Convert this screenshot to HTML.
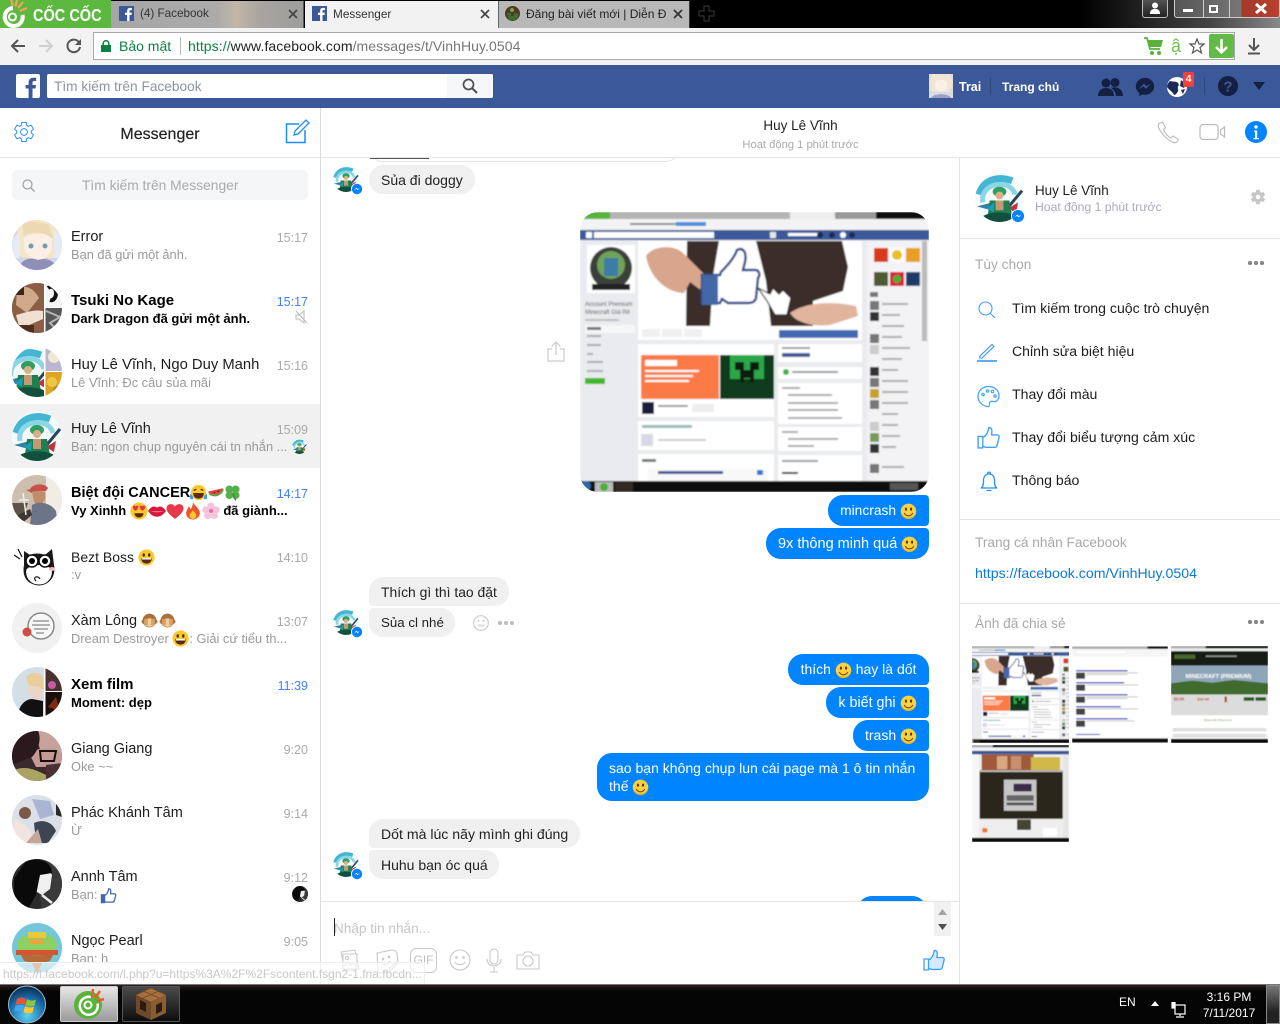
<!DOCTYPE html>
<html lang="vi"><head><meta charset="utf-8"><title>Messenger</title>
<style>
*{box-sizing:border-box}
html,body{margin:0;padding:0;width:1280px;height:1024px;overflow:hidden;background:#fff;font-family:"Liberation Sans","Noto Sans CJK SC",sans-serif;color:#111}
.b{position:absolute}
.t{position:absolute;white-space:nowrap;line-height:18px;height:18px}
svg{position:absolute;overflow:hidden}
svg.e{position:static;display:inline-block;width:16px;height:16px;vertical-align:-4px}
.bub svg.e{width:17px;height:18px;vertical-align:-5px}
.n svg.e{width:17px;height:17px}
.s svg.e{width:17px;height:17px}
.s.u svg.e{width:18px;height:18px;vertical-align:-5px}
.av{left:12px;width:50px;height:50px;border-radius:50%}
.n{left:71px;font-size:14.5px;color:#1d1d1d;margin-top:1px}
.s{left:71px;font-size:12.85px;color:#9a9a9a;margin-top:1px}
.u{font-weight:bold;color:#000}
.n.u{font-size:15px}.s.u{font-size:13px}
.tm{right:972px;font-size:12.5px;color:#aaa;margin-top:1px}
.tm.u{font-weight:normal;color:#4080ff}
.bub{position:absolute;font-size:14px;line-height:18px;white-space:nowrap;padding:6px 12px}
.in{background:#f1f0f0;color:#222;left:369px;height:29px;border-radius:14px}
.out{background:#0084ff;color:#fff;border-radius:15px 4px 4px 15px;height:31px;padding-top:6px;text-align:center}
.it{left:1012px;font-size:14.1px;color:#1d1d1d}
.hd{font-size:13.7px;color:#a9a9a9;left:975px;margin-top:1px}
.dots{position:absolute;width:16px;height:4px;background:radial-gradient(circle at 2px 2px,#888 2px,transparent 2.3px) 0 0/6px 4px repeat-x}
.ln{position:absolute;background:#e5e5e5}
</style></head><body>
<svg width="0" height="0" style="position:absolute"><defs>
<filter id="bl"><feGaussianBlur stdDeviation=".7"/></filter>
<filter id="bl2"><feGaussianBlur stdDeviation="1.4"/></filter>

<g id="sm"><circle cx="8" cy="8.3" r="7.3" fill="#fcd13e"/><path d="M1 8.3a7 7 0 0 0 14 0c-1 4-3 6-7 6s-6-2-7-6z" fill="#e9a922"/><ellipse cx="5.6" cy="6.2" rx="1" ry="1.5" fill="#5a3b0a"/><ellipse cx="10.4" cy="6.2" rx="1" ry="1.5" fill="#5a3b0a"/><path d="M4 9.8c1 2.2 2.5 2.7 4 2.7s3-.5 4-2.7" fill="none" stroke="#6b4a10" stroke-width="1"/></g>
<g id="gr"><circle cx="8" cy="8" r="7.6" fill="#fcc928"/><ellipse cx="5.4" cy="5.6" rx="1.1" ry="1.6" fill="#40290a"/><ellipse cx="10.6" cy="5.6" rx="1.1" ry="1.6" fill="#40290a"/><path d="M3 8.5h10c0 3.5-2.2 5.3-5 5.3S3 12 3 8.5z" fill="#5a2a12"/><path d="M3.6 8.5h8.8v1.4H3.6z" fill="#fff"/></g>
<g id="lau"><circle cx="8" cy="8" r="7.2" fill="#fcc928"/><path d="M3.5 6l2.5-1M12.5 6L10 5" stroke="#40290a" stroke-width="1.2"/><path d="M3 8.5h10c0 3.5-2.2 5.3-5 5.3S3 12 3 8.5z" fill="#5a2a12"/><path d="M0 9c1 1 3 2 3 4s-3 2-3 0zM16 9c-1 1-3 2-3 4s3 2 3 0z" fill="#3d9df0"/></g>
<g id="mel"><path d="M1 7a8 8 0 0 0 14-3z" fill="#e8403f"/><path d="M1 7a8 8 0 0 0 14-3l.8 1.5A9 9 0 0 1 2 10z" fill="#58a83a"/><circle cx="7" cy="8" r=".8" fill="#333"/><circle cx="10.5" cy="7" r=".8" fill="#333"/></g>
<g id="clo" fill="#54b04a"><circle cx="5" cy="5" r="3.6"/><circle cx="11" cy="5" r="3.6"/><circle cx="5" cy="10.5" r="3.6"/><circle cx="11" cy="10.5" r="3.6"/><path d="M8 8l3 7.5" stroke="#3e8a36" stroke-width="1.3"/></g>
<g id="hey"><circle cx="8" cy="8" r="7.6" fill="#fcc928"/><path d="M5 8C2 6 2 3.5 3.5 3.2 4.5 3 5 4 5 4s.5-1 1.6-.8C8 3.5 7.500 6 5 8zM11 8C8.500 6 8 3.500 9.400 3.200 10.500 3 11 4 11 4s.5-1 1.500-.8C14 3.500 14 6 11 8z" fill="#e8304a"/><path d="M4 10h8c0 2.200-2 3.800-4 3.800S4 12.200 4 10z" fill="#5a2a12"/></g>
<g id="lip"><path d="M0 8c3-4 5-5 8-3 3-2 5-1 8 3-3 4-5 5-8 5s-5-1-8-5z" fill="#d8173a"/><path d="M2 8c3 .8 8 .8 12 0-4 1.400-8 1.400-12 0z" fill="#fff"/></g>
<g id="hrt"><path d="M8 15C1 10 0 7 .6 4.500 1.500 1.500 6 .8 8 4c2-3.200 6.500-2.500 7.400.5C16 7 15 10 8 15z" fill="#e8394a"/></g>
<g id="fir"><path d="M8 0c1 3 5 5 6 9 .6 3.500-2.500 6.500-6 6.500S1.400 13 2 9c.3-2 1.500-3 2-5 1 .6 1.500 1.500 1.800 2.500C7 5 8 3 8 0z" fill="#f0532a"/><path d="M8 7c.6 2 3 3 3 5 0 2-1.500 3-3 3s-3-1-3-3c0-2 2.500-3 3-5z" fill="#fcc928"/></g>
<g id="flo"><g fill="#f6c4da"><circle cx="8" cy="3.500" r="3.200"/><circle cx="3.500" cy="7" r="3.200"/><circle cx="12.500" cy="7" r="3.200"/><circle cx="5" cy="12" r="3.200"/><circle cx="11" cy="12" r="3.200"/></g><circle cx="8" cy="8" r="1.800" fill="#e86aa0"/></g>
<g id="mon"><circle cx="2.500" cy="9" r="2" fill="#b57a4c"/><circle cx="13.500" cy="9" r="2" fill="#b57a4c"/><circle cx="8" cy="8" r="6.500" fill="#a8703f"/><ellipse cx="8" cy="10" rx="5" ry="4" fill="#f1cf9d"/><path d="M3 6.500h3.500v6H3zM9.500 6.500H13v6H9.500z" fill="#d99f63"/></g>

<g id="thumb"><path d="M2 11h4.500v11H2z M6.500 12c3-1.200 5-5 5.800-9.500 2.400-.4 3.700 2.200 2.500 7h5.400c1.700 0 2.300 1.200 1.900 2.700l-1.900 7.300c-.3 1.300-1.200 1.900-2.400 1.900H9.300l-2.800-1" fill="none" stroke-linejoin="round"/></g>
<path id="gearp" d="M19.140 12.940c.04-.3.060-.61.060-.94 0-.32-.02-.64-.07-.94l2.030-1.580c.18-.14.23-.41.120-.61l-1.920-3.320c-.12-.22-.37-.29-.59-.22l-2.390.96c-.5-.38-1.030-.7-1.620-.94l-.36-2.540c-.04-.24-.24-.41-.48-.41h-3.840c-.24 0-.43.17-.47.41l-.36 2.540c-.59.24-1.130.57-1.620.94l-2.390-.96c-.22-.08-.47 0-.59.22L2.740 8.870c-.12.21-.08.47.12.61l2.030 1.580c-.05.3-.09.63-.09.94s.02.64.07.94l-2.030 1.580c-.18.14-.23.41-.12.61l1.920 3.320c.12.22.37.29.59.22l2.390-.96c.5.38 1.030.7 1.620.94l.36 2.540c.05.24.24.41.48.41h3.840c.24 0 .44-.17.47-.41l.36-2.540c.59-.24 1.130-.56 1.620-.94l2.390.96c.22.08.47 0 .59-.22l1.920-3.320c.12-.22.07-.47-.12-.61l-2.010-1.580z"/>

<g id="zoro"><rect width="50" height="50" fill="#f4f9fa"/><path d="M4 22C8 8 22 2 38 8" fill="none" stroke="#43b6d4" stroke-width="7"/><path d="M8 30C6 18 16 10 30 12c6 1 10 6 11 10" fill="none" stroke="#8ad5e6" stroke-width="5"/><path d="M2 34l20-5-2 10z" fill="#2f7fa8"/><path d="M48 18L33 36" stroke="#28465e" stroke-width="3"/><path d="M44 30l-10 6 8 5z" fill="#c2343c"/><ellipse cx="25" cy="19" rx="7" ry="5" fill="#2f9e5f"/><circle cx="25" cy="23" r="4" fill="#d9b188"/><path d="M15 28h20l3 16H13z" fill="#1f7f50"/><path d="M21 28h8v10h-8z" fill="#c39a74"/><path d="M8 44c8-5 26-5 34 0v6H8z" fill="#124f3d"/><path d="M12 36l8-6-1 10z" fill="#17a0b8"/></g>
<g id="aerr"><rect width="50" height="50" fill="#cfd7ec"/><path d="M8 0h36l6 20-8 18H10L2 24z" fill="#f3e5c6"/><path d="M12 18c4-5 24-6 28 0v10c-3 8-8 12-14 12S15 36 12 28z" fill="#fbefe4"/><path d="M10 0l26 4 6 16c-8-8-20-10-30-4z" fill="#ecd9b1"/><circle cx="19" cy="26" r="2.500" fill="#6c9fb0"/><circle cx="33" cy="26" r="2.500" fill="#6c9fb0"/><path d="M6 50c2-10 12-14 20-10 8-3 18 1 20 10z" fill="#8f90b8"/><path d="M0 20l8-8v26H0zM42 10l8 8v20h-8z" fill="#e6eaf4"/></g>
<g id="atsu"><rect width="50" height="50" fill="#7c5540"/><path d="M0 0h32v50H0z" fill="#8a5f45"/><path d="M5 5c10-4 18 2 22 10L15 30 4 22z" fill="#cfa98a"/><path d="M4 32c8-2 18-6 27-4v8L8 46z" fill="#efe0cf"/><path d="M0 0h12v12H0z" fill="#3a2618"/><path d="M0 42h22v8H0z" fill="#4e2f1f"/><rect x="32" width="18" height="50" fill="#fff"/><rect x="33.500" width="17" height="24" fill="#f4f4f4"/><path d="M36 5c4-3 8 0 8 5s-3 8-6 7" fill="none" stroke="#111" stroke-width="4"/><rect x="33.500" y="25" width="17" height="25" fill="#575757"/><path d="M34 28l14 6-10 6 8 8" stroke="#b5b5b5" stroke-width="2" fill="none"/></g>
<g id="agrp"><rect width="50" height="50" fill="#fff"/><svg width="32" height="50" viewBox="9 0 32 50"><use href="#zoro"/></svg><rect x="33.500" width="17" height="24" fill="#b8b7cf"/><circle cx="42" cy="10" r="6" fill="#f2e7d3"/><rect x="33.500" y="25" width="17" height="25" fill="#dba626"/><circle cx="40" cy="35" r="5" fill="#f0c743"/><circle cx="46" cy="44" r="5" fill="#a87a16"/></g>
<g id="acan"><rect width="50" height="50" fill="#cdbfad"/><rect x="34" width="16" height="50" fill="#f1ece6"/><path d="M0 28h16l-8 22H0z" fill="#5d5349"/><path d="M18 14c4-6 14-6 18-1l-2 3-16 1z" fill="#c8524a"/><path d="M14 15l6-1v4z" fill="#c8524a"/><path d="M20 17h13v7c-2 6-8 7-11 3z" fill="#bf8d6a"/><path d="M20 30c6-4 18-3 24 6l2 14H18z" fill="#6a7688"/><path d="M6 40l12-6 2 6-12 10z" fill="#3e3732"/><path d="M11 18l3 22M7 25h10" stroke="#eee" stroke-width="1.500"/></g>
<g id="acat"><rect width="50" height="50" fill="#fff"/><path d="M12 12l6 4c4-2 10-2 15 0l7-6 2 16c2 8-2 20-15 20S10 36 12 26z" fill="#1a1a1a"/><path d="M14 30c6-6 20-6 26 0 2 8-4 16-13 16S12 38 14 30z" fill="#fff" stroke="#111"/><circle cx="20" cy="22" r="6" fill="#fff" stroke="#111" stroke-width="1.500"/><circle cx="33" cy="22" r="6" fill="#fff" stroke="#111" stroke-width="1.500"/><circle cx="20" cy="22" r="3" fill="#000"/><circle cx="33" cy="22" r="3" fill="#000"/><ellipse cx="40" cy="30" rx="3" ry="2" fill="#f3b6b6"/><path d="M2 16l6 4M6 10l4 8M24 42c-4-4 2-6 4-2" stroke="#111" fill="none" stroke-width="1.200"/></g>
<g id="axam"><rect width="50" height="50" fill="#f1f1f1"/><circle cx="29" cy="23" r="13" fill="#f7f7f7" stroke="#8a8a8a" stroke-width="1.500"/><path d="M21 18h16M20 22h18M22 26h14M24 30h8" stroke="#888" stroke-width="1.200"/><circle cx="15" cy="29" r="4.500" fill="#d24b4b"/></g>
<g id="afil"><rect width="50" height="50" fill="#fff"/><rect width="32" height="50" fill="#d2e0e6"/><path d="M14 10c5-6 14-5 17 0v12l-12 4z" fill="#eacd9d"/><path d="M16 18l12 2 3 8-6 6-9-8z" fill="#edd5c5"/><path d="M6 50c0-12 8-18 14-18l11 2v16z" fill="#111"/><rect x="33.500" width="17" height="24" fill="#473230"/><circle cx="40" cy="18" r="4" fill="#c65aa8"/><rect x="33.500" y="25" width="17" height="25" fill="#1a0f0c"/><path d="M36 40l8-10 4 14z" fill="#7c2b0f"/></g>
<g id="agia"><rect width="50" height="50" fill="#3a2a2d"/><path d="M22 0h28v26l-18 4z" fill="#c8a39c"/><path d="M16 20l26-4 8 8v12H24z" fill="#c69a92"/><path d="M0 0h26c4 8 0 20-6 26L0 34z" fill="#2a1a1e"/><path d="M28 20h16l-2 10H29z" fill="none" stroke="#111" stroke-width="2"/><path d="M0 40c12-6 22-2 34 4v6H0z" fill="#a9a463"/><path d="M34 34l16-2v18H34z" fill="#4a3034"/></g>
<g id="apha"><rect width="50" height="50" fill="#dbe0e8"/><path d="M20 4l18 2 4 14-14 4z" fill="#a8b6d3"/><circle cx="13" cy="18" r="6" fill="#7a5a46"/><path d="M2 24c8 2 16 8 18 18l-6 6H2z" fill="#f1e4de"/><path d="M22 28c8-4 18-2 22 8L36 48H24z" fill="#3e4552"/><path d="M44 8l6 6v8l-6-2z" fill="#2a2a2a"/><path d="M14 48l12-14 4 14z" fill="#c7a69a"/></g>
<g id="aann"><rect width="50" height="50" fill="#2b2b2b"/><path d="M22 0h28v50H30z" fill="#3a3a3a"/><path d="M18 14c4-6 18-6 22 2l-2 14-8 6-10-6z" fill="#f0f0f0"/><path d="M14 2c12-4 26 0 26 12l-12 2-4 20-8 14H2V20z" fill="#0a0a0a"/><path d="M30 36l10 8" stroke="#eee" stroke-width="2.500"/></g>
<g id="aper"><rect width="50" height="50" fill="#74c7d8"/><ellipse cx="25" cy="22" rx="20" ry="12" fill="#8ecf62"/><path d="M8 30c10 3 24 3 34 0l-4 8-8 2-5 10-5-10-8-2z" fill="#b36a38"/><path d="M4 27h42v5H4z" fill="#d4552f"/><rect x="16" y="9" width="18" height="6" fill="#e8c83e"/><rect x="18" y="16" width="14" height="5" fill="#e8a63e"/></g>
<g id="ame"><rect width="24" height="24" fill="#d9dbe6"/><path d="M3 0h18l3 9-3 9H3L0 10z" fill="#f0e6d3"/><path d="M6 8c3-3 9-3 12 0v6c-2 4-10 4-12 0z" fill="#fbf0e8"/><path d="M2 24c2-5 18-5 20 0z" fill="#9ea0c2"/></g>
<g id="bdg"><circle cx="6" cy="6" r="6" fill="#fff"/><circle cx="6" cy="6" r="5.200" fill="#0084ff"/><path d="M3 7.200l2.300-2.400 1.500 1.300L9 4.800 6.700 7.200 5.200 5.900z" fill="#fff"/></g>

<g id="shot">
<rect width="349" height="280" fill="#e9ebee"/>
<rect width="349" height="7" fill="#999"/><rect width="30" height="7" fill="#58b33b"/><rect x="30" y="0" width="225" height="7" fill="#b4b4b4"/><rect x="210" y="0" width="45" height="7" fill="#eee"/><rect x="296" width="53" height="7" fill="#111"/>
<rect y="7" width="349" height="11" fill="#f3f3f3"/><rect x="96" y="10" width="30" height="4" fill="#4a8fe0"/><rect x="50" y="11" width="46" height="2" fill="#888"/>
<rect y="18" width="349" height="10" fill="#3b5998"/><rect x="14" y="20" width="120" height="6" fill="#fff"/><rect x="6" y="20" width="6" height="6" fill="#fff"/><rect x="190" y="20" width="6" height="6" fill="#e8e8e8"/><rect x="208" y="21" width="30" height="3" fill="#fff"/><circle cx="240" cy="23" r="3" fill="#1a2b55"/><circle cx="252" cy="23" r="3" fill="#1a2b55"/><circle cx="263" cy="23" r="3" fill="#fff"/><circle cx="272" cy="23" r="3" fill="#1a2b55"/>
<rect x="7" y="33" width="48" height="48" fill="#fff"/><circle cx="31" cy="56" r="21" fill="#3a3f3a"/><circle cx="31" cy="53" r="14" fill="#6fa35a"/><rect x="24" y="46" width="14" height="18" fill="#3a7ca8"/><rect x="12" y="72" width="38" height="6" fill="#222"/>
<text x="5" y="94" font-size="6" fill="#444" font-family="Liberation Sans">Account Premium</text><text x="5" y="102" font-size="6" fill="#444" font-family="Liberation Sans">Minecraft Giá Rẻ</text>
<rect x="5" y="107" width="34" height="2" fill="#bbb"/><rect x="5" y="113" width="50" height="8" fill="#f7f7f7"/><rect x="7" y="115" width="14" height="3" fill="#777"/><g fill="#aaa"><rect x="7" y="123" width="14" height="2"/><rect x="7" y="132" width="14" height="2"/><rect x="7" y="141" width="6" height="2"/><rect x="7" y="149" width="16" height="2"/><rect x="7" y="158" width="16" height="2"/></g><rect x="5" y="166" width="20" height="6" fill="#42b72a"/>
<rect x="58" y="29" width="224" height="85" fill="#fff"/>
<path d="M107 29h32l-6 35-3 50h-24zM176 29h86l6 26-5 24-30 10v25h-42l-5-45z" fill="#3a2f2b"/>
<path d="M66 44c6-10 26-12 36-4l22 22c6 6 2 20-6 14l-8-6-6 11c-16 0-34-14-38-37z" fill="#d8a68d"/>
<path d="M210 101c12-9 38-13 66-7l2 10-28 9c-16 2-34-2-40-12z" fill="#e0b49d"/>
<path d="M122 63h18l1-3c8-8 14-16 16-22 6-3 10 2 8 12l-2 8h12c5 0 5 6 3 8l-2 20c-1 4-4 5-8 5h-20l-6-4-2 4h-18z" fill="#fff" stroke="#2b4a8a" stroke-width="2.500"/><path d="M122 63h16v30h-16z" fill="#4267a8"/>
<path d="M178 76l12 6 3-6 6 6 4-4 8 8-4 17h-12l-8-14z" fill="#fff" stroke="#111" stroke-width="1.200"/>
<rect x="58" y="114" width="224" height="14" fill="#fff"/><g fill="#f0f0f0"><rect x="62" y="117" width="18" height="8"/><rect x="82" y="117" width="20" height="8"/><rect x="104" y="117" width="18" height="8"/></g><rect x="199" y="118" width="79" height="8" fill="#4267b2"/>
<rect x="58" y="132" width="136" height="73" fill="#fff"/><rect x="61" y="143" width="78" height="44" fill="#fb7a45"/><g fill="#fff"><rect x="65" y="148" width="32" height="6"/><rect x="65" y="158" width="54" height="2"/><rect x="65" y="163" width="48" height="2"/><rect x="65" y="168" width="44" height="2"/></g>
<rect x="140" y="143" width="54" height="44" fill="#0f3a1a"/><rect x="150" y="143" width="34" height="24" fill="#2ba84a"/><path d="M155 150h9v8h6v-8h9v8h-5v12h-4v-4h-6v4h-4v-12h-5z" fill="#0c1c10"/>
<rect x="62" y="190" width="12" height="12" fill="#1a1a3a"/><rect x="78" y="193" width="30" height="2" fill="#999"/><rect x="112" y="192" width="22" height="8" fill="#eee"/>
<rect x="58" y="209" width="136" height="29" fill="#fff"/><rect x="62" y="213" width="50" height="3" fill="#9bb"/><rect x="61" y="222" width="12" height="12" fill="#d8d8e8"/><rect x="78" y="227" width="48" height="2" fill="#ccc"/>
<rect x="58" y="242" width="136" height="27" fill="#fff"/><rect x="62" y="247" width="14" height="3" fill="#777"/><rect x="68" y="257" width="120" height="12" fill="#f8f8f8"/><rect x="78" y="259" width="65" height="3" fill="#3b5998"/><rect x="177" y="258" width="6" height="5" fill="#2a7ad4"/>
<rect x="198" y="132" width="84" height="18" fill="#fff"/><rect x="202" y="135" width="28" height="2" fill="#999"/><rect x="202" y="141" width="28" height="4" fill="#3b5998"/>
<rect x="198" y="155" width="84" height="12" fill="#fff"/><circle cx="206" cy="160" r="3" fill="#3cb043"/><rect x="212" y="159" width="46" height="2" fill="#999"/>
<rect x="198" y="171" width="84" height="41" fill="#fff"/><g fill="#aaa"><rect x="202" y="175" width="18" height="2"/><rect x="208" y="182" width="44" height="2"/><rect x="208" y="190" width="50" height="2"/><rect x="208" y="197" width="50" height="2"/><rect x="208" y="205" width="54" height="2"/></g>
<rect x="198" y="215" width="84" height="24" fill="#fff"/><g fill="#aaa"><rect x="202" y="219" width="16" height="2"/><rect x="208" y="226" width="50" height="2"/><rect x="208" y="233" width="26" height="2"/></g>
<rect x="198" y="243" width="84" height="26" fill="#fff"/><rect x="202" y="248" width="36" height="2" fill="#999"/><rect x="202" y="260" width="16" height="2" fill="#111"/>
<rect x="287" y="29" width="62" height="240" fill="#f3f3f5"/><rect x="342" y="29" width="5" height="100" fill="#bbb"/>
<rect x="294" y="36" width="14" height="14" fill="#d83a1a"/><rect x="310" y="36" width="14" height="14" fill="#fff"/><circle cx="317" cy="43" r="5" fill="#e8c020"/><rect x="326" y="36" width="14" height="14" fill="#e8a020"/><rect x="294" y="60" width="14" height="14" fill="#4e5a30"/><rect x="310" y="60" width="14" height="14" fill="#d8203a"/><circle cx="317" cy="67" r="4" fill="#4caf30"/><rect x="326" y="60" width="14" height="14" fill="#1a3a6a"/>
<g fill="#777"><rect x="290" y="80" width="8" height="5"/><rect x="290" y="89" width="9" height="9"/><rect x="290" y="100" width="9" height="9" fill="#333"/><rect x="290" y="122" width="9" height="9"/><rect x="290" y="133" width="9" height="9" fill="#ccc"/><rect x="290" y="155" width="9" height="9" fill="#333"/><rect x="290" y="166" width="9" height="9"/><rect x="290" y="177" width="9" height="9" fill="#c8a020"/><rect x="290" y="188" width="9" height="9"/><rect x="290" y="210" width="9" height="9" fill="#ccc"/><rect x="290" y="221" width="9" height="9" fill="#7a9a5a"/><rect x="290" y="232" width="9" height="9" fill="#333"/><rect x="290" y="252" width="9" height="9"/></g>
<g fill="#aaa"><rect x="302" y="91" width="26" height="2"/><rect x="302" y="102" width="18" height="2"/><rect x="302" y="113" width="22" height="2"/><rect x="302" y="124" width="20" height="2"/><rect x="302" y="135" width="28" height="2"/><rect x="302" y="146" width="20" height="2"/><rect x="302" y="157" width="16" height="2"/><rect x="302" y="168" width="26" height="2"/><rect x="302" y="179" width="26" height="2"/><rect x="302" y="190" width="26" height="2"/><rect x="302" y="201" width="16" height="2"/><rect x="302" y="212" width="16" height="2"/><rect x="302" y="223" width="18" height="2"/><rect x="302" y="234" width="14" height="2"/><rect x="302" y="254" width="22" height="2"/></g>
<rect y="269" width="349" height="11" fill="#0a0a0a"/><circle cx="6" cy="274" r="5" fill="#2a6aa8"/><rect x="15" y="270" width="18" height="10" fill="#bbb"/><circle cx="24" cy="275" r="4" fill="#4caf30"/><rect x="35" y="270" width="18" height="10" fill="#332a20"/><rect x="310" y="271" width="28" height="7" fill="#555"/>
</g>
<g id="shot2"><rect width="280" height="280" fill="#fff"/><rect width="280" height="7" fill="#aaa"/><rect x="220" width="60" height="7" fill="#111"/><rect y="7" width="280" height="22" fill="#f6f6f6"/><rect x="10" y="11" width="150" height="10" fill="#fff" stroke="#ddd"/><g fill="#4a4ac8"><rect x="12" y="69" width="150" height="4"/><rect x="12" y="104" width="140" height="4"/><rect x="12" y="139" width="150" height="4"/><rect x="12" y="174" width="130" height="4"/><rect x="12" y="209" width="150" height="4"/><rect x="12" y="255" width="70" height="3"/></g><g fill="#aaa"><rect x="42" y="76" width="150" height="2"/><rect x="42" y="81" width="120" height="2"/><rect x="42" y="111" width="150" height="2"/><rect x="42" y="146" width="150" height="2"/><rect x="42" y="151" width="120" height="2"/><rect x="42" y="181" width="150" height="2"/><rect x="42" y="216" width="140" height="2"/></g><g fill="#444"><rect x="12" y="76" width="26" height="18"/><rect x="12" y="111" width="26" height="18"/><rect x="12" y="146" width="26" height="18"/><rect x="12" y="181" width="26" height="18"/><rect x="12" y="216" width="26" height="18"/></g><rect y="268" width="280" height="12" fill="#0a0a0a"/></g>
<g id="shot3"><rect width="280" height="280" fill="#fff"/><rect width="280" height="7" fill="#aaa"/><rect x="100" width="180" height="7" fill="#111"/><rect y="7" width="280" height="8" fill="#eee"/><rect y="15" width="280" height="42" fill="#141a14"/><rect x="10" y="25" width="60" height="12" fill="#4a6a2a"/><rect x="100" y="27" width="90" height="5" fill="#888"/><rect y="57" width="280" height="58" fill="#8ea6b8"/><path d="M0 140V108l60-8 60 6 60-8 100 10v32z" fill="#3f6a2e"/><text x="42" y="92" font-size="16.5" font-weight="bold" fill="#fff" font-family="Liberation Sans">MINECRAFT (PREMIUM)</text><rect y="140" width="280" height="60" fill="#dcdcdc"/><text x="8" y="158" font-size="12" font-weight="bold" fill="#b5452a" font-family="Liberation Sans">$0.00</text><text x="76" y="158" font-size="11" font-weight="bold" fill="#b5452a" font-family="Liberation Sans">$10.00</text><rect x="155" y="146" width="6" height="16" fill="#a33"/><rect x="210" y="148" width="30" height="10" fill="#245a24"/><rect x="244" y="148" width="30" height="10" fill="#245a24"/><text x="95" y="216" font-size="9" fill="#6f9a4a" font-family="Liberation Sans">Minecraft (Premium)</text><g fill="#aaa"><rect x="5" y="238" width="270" height="2"/><rect x="5" y="243" width="270" height="2"/><rect x="5" y="255" width="270" height="2"/><rect x="5" y="260" width="270" height="2"/></g><rect y="268" width="280" height="12" fill="#0a0a0a"/></g>
<g id="shot4"><rect width="280" height="280" fill="#eee"/><rect width="280" height="7" fill="#aaa"/><rect x="60" width="220" height="7" fill="#111"/><rect y="7" width="280" height="10" fill="#f3f3f3"/><rect y="17" width="280" height="10" fill="#3b5998"/><rect x="28" y="27" width="150" height="46" fill="#a05a3a"/><rect x="72" y="32" width="30" height="38" fill="#d8a880"/><rect x="112" y="32" width="30" height="38" fill="#c89070"/><rect x="170" y="35" width="84" height="38" fill="#d0b848"/><rect x="22" y="73" width="240" height="140" fill="#2c261d"/><rect x="22" y="73" width="240" height="5" fill="#bbb"/><rect x="92" y="100" width="94" height="90" fill="#c6c6c6"/><rect x="120" y="112" width="52" height="22" fill="#3a2a4a"/><rect x="100" y="145" width="78" height="16" fill="#666"/><rect x="100" y="166" width="78" height="8" fill="#555"/><rect x="0" y="27" width="20" height="250" fill="#f6f6f6"/><rect x="264" y="27" width="16" height="250" fill="#e6e6e6"/><rect x="130" y="215" width="40" height="30" fill="#443"/><rect x="30" y="240" width="14" height="12" fill="#f07030"/><rect x="205" y="240" width="40" height="24" fill="#fff"/><rect y="268" width="280" height="12" fill="#0a0a0a"/></g>
</defs></svg>

<!-- browser chrome -->
<div class="b" style="left:0;top:0;width:1280px;height:28px;background:#000"></div>
<div class="b" style="left:1080px;top:0;width:200px;height:28px;background:linear-gradient(90deg,#000,#444 65%,#888)"></div>
<div class="b" style="left:0;top:0;width:111px;height:28px;background:#5cb83f"></div>
<svg style="left:0;top:0" width="32" height="28" viewBox="0 0 32 28"><path d="M13 8a9 9 0 1 0 9.500 7" fill="none" stroke="#fff" stroke-width="4"/><circle cx="12.500" cy="17" r="3.500" fill="none" stroke="#fff" stroke-width="2"/><path d="M11 0l2 6 M17 0l-1.500 6.500 M23 2l-5 6 M27 8l-7 3" stroke="#f2a35c" stroke-width="2.200"/></svg>
<div class="t" style="left:33px;top:5px;font-size:17.5px;font-weight:bold;color:#fff;line-height:20px;transform:scaleX(.83);transform-origin:0 0">CỐC CỐC</div>
<div class="b" style="left:111px;top:1px;width:193px;height:27px;background:linear-gradient(90deg,#a6a6a6,#ababab 55%,#c2b6a8 65%,#a8a4a0 78%,#9e9e9e);border-right:1px solid #555"></div>
<div class="b" style="left:305px;top:1px;width:193px;height:27px;background:#f2f2f2"></div>
<div class="b" style="left:498px;top:1px;width:192px;height:27px;background:#b8b8b8;border-right:1px solid #333;border-left:1px solid #666"></div>
<svg style="left:119px;top:6px" width="15" height="15" viewBox="0 0 15 15"><rect width="15" height="15" fill="#3b5998"/><path d="M10.500 15V9h2l.3-2.400h-2.300V5.200c0-.7.2-1.100 1.200-1.100h1.200V2c-.3 0-1-.1-1.800-.1-1.800 0-3 1.100-3 3.100v1.600H6V9h2.100v6z" fill="#fff"/></svg>
<svg style="left:312px;top:6px" width="15" height="15" viewBox="0 0 15 15"><rect width="15" height="15" fill="#3b5998"/><path d="M10.500 15V9h2l.3-2.400h-2.300V5.200c0-.7.2-1.100 1.200-1.100h1.200V2c-.3 0-1-.1-1.800-.1-1.800 0-3 1.100-3 3.100v1.600H6V9h2.100v6z" fill="#fff"/></svg>
<svg style="left:505px;top:6px" width="15" height="15" viewBox="0 0 15 15"><circle cx="7.500" cy="7.500" r="7.500" fill="#4c3a25"/><path d="M2 7h4v3h3V7h4v5l-3 2H4z" fill="#3e6d2e"/><circle cx="7" cy="4" r="2" fill="#7fa04a"/></svg>
<div class="t" style="left:140px;top:5px;font-size:11.7px;color:#333">(4) Facebook</div>
<div class="t" style="left:333px;top:5px;font-size:11.8px;color:#333">Messenger</div>
<div class="t" style="left:526px;top:5px;font-size:12px;color:#222;width:140px;overflow:hidden">Đăng bài viết mới | Diễn Đ</div>
<svg style="left:288px;top:9px" width="10" height="10"><path d="M1 1l8 8M9 1l-8 8" stroke="#444" stroke-width="1.700"/></svg>
<svg style="left:480px;top:9px" width="10" height="10"><path d="M1 1l8 8M9 1l-8 8" stroke="#444" stroke-width="1.700"/></svg>
<svg style="left:673px;top:9px" width="10" height="10"><path d="M1 1l8 8M9 1l-8 8" stroke="#333" stroke-width="1.700"/></svg>
<svg style="left:698px;top:5px" width="18" height="18"><path d="M6 1h5v5h5v5h-5v5H6v-5H1V6h5z" fill="none" stroke="#3a3a3a"/></svg>
<div class="b" style="left:1142px;top:-2px;width:26px;height:20px;border:1px solid #bbb;border-radius:3px;background:linear-gradient(#555,#222)"></div>
<svg style="left:1149px;top:2px" width="12" height="12"><circle cx="6" cy="3.500" r="3" fill="#fff"/><path d="M1 12c0-4 2-5 5-5s5 1 5 5z" fill="#fff"/></svg>
<div class="b" style="left:1174px;top:-2px;width:106px;height:20px;border:1px solid #ccc;border-radius:3px;background:linear-gradient(90deg,#555,#777 64%,#a33a2a 64%,#b8402f)"></div>
<div class="b" style="left:1203px;top:0;width:1px;height:17px;background:#ccc"></div><div class="b" style="left:1229px;top:0;width:1px;height:17px;background:#ccc"></div>
<div class="b" style="left:1183px;top:9px;width:10px;height:3px;background:#fff"></div>
<div class="b" style="left:1209px;top:5px;width:9px;height:8px;border:2px solid #fff"></div>
<svg style="left:1254px;top:3px" width="14" height="11"><path d="M2 1l10 9M12 1L2 10" stroke="#fff" stroke-width="3"/></svg>

<div class="b" style="left:0;top:28px;width:1280px;height:37px;background:#f2f2f2"></div>
<svg style="left:10px;top:38px" width="16" height="16"><path d="M15 8H2M8 2L2 8l6 6" fill="none" stroke="#555" stroke-width="2"/></svg>
<svg style="left:38px;top:38px" width="16" height="16"><path d="M1 8h13M8 2l6 6-6 6" fill="none" stroke="#cfcfcf" stroke-width="2"/></svg>
<svg style="left:66px;top:38px" width="16" height="16"><path d="M13.500 5.200A6.300 6.300 0 1 0 14 9" fill="none" stroke="#555" stroke-width="2"/><path d="M15 1v6H9z" fill="#555"/></svg>
<div class="b" style="left:93px;top:32px;width:1142px;height:28px;background:#fff;border:1px solid #aaa"></div>
<svg style="left:101px;top:40px" width="10" height="12"><rect y="5" width="10" height="7" fill="#0b8043"/><path d="M2.200 5V3.500a2.800 2.800 0 0 1 5.600 0V5" fill="none" stroke="#0b8043" stroke-width="1.500"/></svg>
<div class="t" style="left:119px;top:37px;font-size:14px;color:#0b8043">Bảo mật</div>
<div class="b" style="left:180px;top:37px;width:1px;height:18px;background:#bbb"></div>
<div class="t" style="left:188px;top:37px;font-size:14px;letter-spacing:.08px;color:#777"><span style="color:#0b8043">https://</span><span style="color:#222">www.facebook.com</span>/messages/t/VinhHuy.0504</div>
<svg style="left:1143px;top:36px" width="21" height="21" viewBox="0 0 21 21"><path d="M1 2h3l3 11h10" fill="none" stroke="#58b33b" stroke-width="1.800"/><path d="M5 4h15l-2 7H7z" fill="#58b33b"/><circle cx="9" cy="17" r="2" fill="#58b33b"/><circle cx="16" cy="17" r="2" fill="#58b33b"/></svg>
<div class="t" style="left:1171px;top:36px;font-size:18px;color:#6cc04a;line-height:20px;height:22px">ậ</div>
<svg style="left:1188px;top:37px" width="18" height="18" viewBox="0 0 18 18"><path d="M9 2l2 5h5l-4 3.500L13.500 16 9 13l-4.500 3L6 10.500 2 7h5z" fill="none" stroke="#555" stroke-width="1.200"/></svg>
<div class="b" style="left:1209px;top:34px;width:25px;height:24px;background:#62bb46;border-radius:2px"></div>
<svg style="left:1213px;top:37px" width="17" height="18"><path d="M8.500 2v13M3 10l5.500 5.500L14 10" fill="none" stroke="#fff" stroke-width="2.500"/></svg>
<svg style="left:1246px;top:37px" width="16" height="18"><path d="M8 1v11M3 8l5 5 5-5" fill="none" stroke="#555" stroke-width="2"/><path d="M2 16.500h12" stroke="#555" stroke-width="2"/></svg>

<!-- fb bar -->
<div class="b" style="left:0;top:65px;width:1280px;height:43px;background:#3b5998"></div>
<svg style="left:16px;top:74px" width="24" height="24" viewBox="0 0 24 24"><rect width="24" height="24" rx="2" fill="#fff"/><path d="M16.500 24v-9.500h3l.5-3.500h-3.500V8.700c0-1 .3-1.700 1.800-1.700h1.800V3.800c-.4 0-1.500-.1-2.800-.1-2.800 0-4.700 1.700-4.700 4.700V11h-3v3.500h3V24z" fill="#3b5998"/></svg>
<div class="b" style="left:47px;top:74px;width:446px;height:24px;background:#fff;border-radius:2px"></div>
<div class="b" style="left:447px;top:74px;width:46px;height:24px;background:#f6f7f9;border-radius:0 2px 2px 0"></div>
<div class="t" style="left:54px;top:78px;font-size:13.7px;color:#8d949e">Tìm kiếm trên Facebook</div>
<svg style="left:462px;top:78px" width="16" height="16"><circle cx="6.500" cy="6.500" r="5" fill="none" stroke="#4b4f56" stroke-width="1.700"/><path d="M10 10l5 5" stroke="#4b4f56" stroke-width="2"/></svg>
<svg style="left:929px;top:74px" width="24" height="24" viewBox="0 0 24 24"><use href="#ame"/></svg>
<div class="t" style="left:959px;top:78px;font-size:12.5px;font-weight:bold;color:#fff">Trai</div>
<div class="b" style="left:990px;top:77px;width:1px;height:18px;background:#2f477a"></div>
<div class="t" style="left:1002px;top:78px;font-size:12px;font-weight:bold;color:#fff">Trang chủ</div>
<svg style="left:1098px;top:78px" width="25" height="19" viewBox="0 0 25 19" fill="#141f42"><circle cx="8" cy="5" r="4.500"/><path d="M0 18c0-5 3-8 8-8s8 3 8 8z"/><circle cx="17" cy="4.500" r="4.500"/><path d="M13 10c6-2 12 1 12 8h-7c0-3-2-6-5-8z"/></svg>
<svg style="left:1134px;top:76px" width="22" height="22" viewBox="0 0 24 24"><path d="M12 2C6.500 2 2 6.100 2 11.300c0 3 1.500 5.600 3.800 7.300V22l3.400-1.900c.9.3 1.800.4 2.800.4 5.500 0 10-4.100 10-9.200S17.500 2 12 2z" fill="#141f42"/><path d="M13 14l-2.600-2.700L5.500 14l5.400-5.700 2.600 2.700 4.900-2.700z" fill="#3b5998"/></svg>
<svg style="left:1166px;top:76px" width="22" height="22" viewBox="0 0 22 22"><circle cx="11" cy="11" r="10" fill="#fff"/><path d="M4 5c3 1 6 0 8 2s-1 4 0 6-2 6-4 6c-1-3-5-5-7-8 0-2 1-4 3-6zM15 4l5 4-2 4-4-2zM15 14l4-1-2 5z" fill="#1a2b55"/></svg>
<div class="b" style="left:1183px;top:72px;width:11px;height:15px;background:#fa3e3e;border-radius:2px;color:#fff;font-size:10.5px;font-weight:bold;line-height:15px;text-align:center">4</div>
<div class="b" style="left:1204px;top:77px;width:1px;height:18px;background:#2f477a"></div>
<svg style="left:1218px;top:76px" width="20" height="20"><circle cx="10" cy="10" r="10" fill="#141f42"/><text x="10" y="15.500" text-anchor="middle" font-size="15" font-weight="bold" fill="#3b5998" font-family="Liberation Sans">?</text></svg>
<svg style="left:1253px;top:82px" width="12" height="8"><path d="M0 0h12L6 8z" fill="#141f42"/></svg>

<!-- structure lines -->
<div class="ln" style="left:0;top:157px;width:1280px;height:1px"></div>
<div class="ln" style="left:320px;top:108px;width:1px;height:876px;background:#dcdcdc"></div>
<div class="ln" style="left:959px;top:157px;width:1px;height:827px"></div>

<!-- left header -->
<svg style="left:12px;top:120px" width="24" height="24" viewBox="0 0 24 24"><use href="#gearp" fill="none" stroke="#2b92f5" stroke-width="1"/><circle cx="12" cy="12" r="3.400" fill="none" stroke="#2b92f5"/></svg>
<div class="t" style="left:0;width:320px;text-align:center;top:126px;font-size:16px;color:#222;-webkit-text-stroke:.2px #222">Messenger</div>
<svg style="left:285px;top:118px" width="25" height="26" viewBox="0 0 25 26"><path d="M14 6H1.500v18.500H20V12" fill="none" stroke="#1e8ef5" stroke-width="1.500"/><path d="M9 17l1-4L21 2l3 3-11 11z" fill="none" stroke="#1e8ef5" stroke-width="1.300"/></svg>
<div class="b" style="left:12px;top:170px;width:296px;height:30px;background:#f5f6f7;border-radius:5px"></div>
<svg style="left:22px;top:179px" width="13" height="13"><circle cx="5.500" cy="5.500" r="4.500" fill="none" stroke="#a0a0a0" stroke-width="1.200"/><path d="M9 9l3.500 3.500" stroke="#a0a0a0" stroke-width="1.300"/></svg>
<div class="t" style="left:82px;top:177px;font-size:13.8px;color:#aaa">Tìm kiếm trên Messenger</div>

<!-- conversation list -->
<div class="b" style="left:0;top:404px;width:320px;height:64px;background:#f1f1f1"></div>

<svg class="av" style="top:220px" viewBox="0 0 50 50"><use href="#aerr"/></svg>
<div class="t n" style="top:227px">Error</div><div class="t s" style="top:245px">Bạn đã gửi một ảnh.</div><div class="t tm" style="top:228px">15:17</div>

<svg class="av" style="top:283px" viewBox="0 0 50 50"><use href="#atsu"/></svg>
<div class="t n u" style="top:291px">Tsuki No Kage</div><div class="t s u" style="top:309px">Dark Dragon đã gửi một ảnh.</div><div class="t tm u" style="top:292px">15:17</div>
<svg style="left:295px;top:310px" width="13" height="14"><path d="M1 5h3l5-4v12L4 9H1z" fill="none" stroke="#bbb"/><path d="M1 1l11 12" stroke="#bbb"/></svg>

<svg class="av" style="top:347px" viewBox="0 0 50 50"><use href="#agrp"/></svg>
<div class="t n" style="top:355px;font-size:14.8px">Huy Lê Vĩnh, Ngo Duy Manh</div><div class="t s" style="top:373px">Lê Vĩnh: Đc câu sủa mãi</div><div class="t tm" style="top:356px">15:16</div>

<svg class="av" style="top:411px" viewBox="0 0 50 50"><use href="#zoro"/></svg>
<div class="t n" style="top:419px">Huy Lê Vĩnh</div><div class="t s" style="top:437px">Bạn: ngon chụp nguyên cái tn nhắn ...</div><div class="t tm" style="top:420px">15:09</div>
<svg style="left:292px;top:439px;border-radius:50%" width="15" height="15" viewBox="0 0 50 50"><use href="#zoro"/></svg>

<svg class="av" style="top:475px" viewBox="0 0 50 50"><use href="#acan"/></svg>
<div class="t n u" style="top:483px;font-size:14.5px">Biệt đội CANCER<svg class="e" viewBox="0 0 16 16"><use href="#lau"/></svg><svg class="e" viewBox="0 0 16 16"><use href="#mel"/></svg><svg class="e" viewBox="0 0 16 16"><use href="#clo"/></svg></div>
<div class="t s u" style="top:501px">Vy Xinhh <svg class="e" viewBox="0 0 16 16"><use href="#hey"/></svg><svg class="e" viewBox="0 0 16 16"><use href="#lip"/></svg><svg class="e" viewBox="0 0 16 16"><use href="#hrt"/></svg><svg class="e" viewBox="0 0 16 16"><use href="#fir"/></svg><svg class="e" viewBox="0 0 16 16"><use href="#flo"/></svg> đã giành...</div>
<div class="t tm u" style="top:484px">14:17</div>

<svg class="av" style="top:539px" viewBox="0 0 50 50"><use href="#acat"/></svg>
<div class="t n" style="top:547px;font-size:14px">Bezt Boss <svg class="e" viewBox="0 0 16 16"><use href="#gr"/></svg></div><div class="t s" style="top:565px">:v</div><div class="t tm" style="top:548px">14:10</div>

<svg class="av" style="top:603px" viewBox="0 0 50 50"><use href="#axam"/></svg>
<div class="t n" style="top:611px">Xàm Lông <svg class="e" viewBox="0 0 16 16"><use href="#mon"/></svg><svg class="e" viewBox="0 0 16 16" style="margin-left:1px"><use href="#mon"/></svg></div>
<div class="t s" style="top:629px">Dream Destroyer <svg class="e" viewBox="0 0 16 16"><use href="#gr"/></svg>: Giải cứ tiểu th...</div><div class="t tm" style="top:612px">13:07</div>

<svg class="av" style="top:667px" viewBox="0 0 50 50"><use href="#afil"/></svg>
<div class="t n u" style="top:675px">Xem film</div><div class="t s u" style="top:693px">Moment: dẹp</div><div class="t tm u" style="top:676px">11:39</div>

<svg class="av" style="top:731px" viewBox="0 0 50 50"><use href="#agia"/></svg>
<div class="t n" style="top:739px">Giang Giang</div><div class="t s" style="top:757px">Oke ~~</div><div class="t tm" style="top:740px">9:20</div>

<svg class="av" style="top:795px" viewBox="0 0 50 50"><use href="#apha"/></svg>
<div class="t n" style="top:803px">Phác Khánh Tâm</div><div class="t s" style="top:821px">Ừ</div><div class="t tm" style="top:804px">9:14</div>

<svg class="av" style="top:859px" viewBox="0 0 50 50"><use href="#aann"/></svg>
<div class="t n" style="top:867px">Annh Tâm</div><div class="t s" style="top:885px">Bạn:</div><div class="t tm" style="top:868px">9:12</div>
<svg style="left:100px;top:887px" width="17" height="17" viewBox="0 0 24 24"><path d="M2 11h4.500v11H2z" fill="#4267b2"/><use href="#thumb" stroke="#4267b2" stroke-width="1.800"/></svg>
<svg style="left:292px;top:886px;border-radius:50%" width="16" height="16" viewBox="0 0 50 50"><use href="#aann"/></svg>

<svg class="av" style="top:923px" viewBox="0 0 50 50"><use href="#aper"/></svg>
<div class="t n" style="top:931px">Ngọc Pearl</div><div class="t s" style="top:949px">Bạn: h</div><div class="t tm" style="top:932px">9:05</div>

<!-- chat top -->
<div class="b" style="left:369px;top:120px;width:311px;height:42px;border:1px solid #e4e4e4;border-radius:0 0 14px 14px;border-top:0"></div>
<div class="b" style="left:370px;top:157px;width:59px;height:2px;background:#555"></div>
<div class="b" style="left:321px;top:108px;width:638px;height:49px;background:#fff"></div>
<div class="ln" style="left:321px;top:157px;width:638px;height:1px"></div>

<!-- chat header -->
<div class="t" style="left:641px;width:319px;text-align:center;top:117px;font-size:13.5px;color:#222">Huy Lê Vĩnh</div>
<div class="t" style="left:641px;width:319px;text-align:center;top:136px;font-size:11.2px;color:#aaa">Hoạt động 1 phút trước</div>
<svg style="left:1157px;top:121px" width="23" height="23" viewBox="0 0 23 23"><path d="M2 2.500L5.500 1c1 2 2 3.500 3 5.500L6.500 8.500c1 3 4.500 7.500 7.500 8.500l2-2c2 1 3.500 2 5.500 3.500L20 21c-1.500 1-3 1-5 0C9 18 3.500 11 1.500 6.500c-.6-1.500-.2-3 .5-4z" fill="none" stroke="#bbb" stroke-width="1.100"/></svg>
<svg style="left:1199px;top:123px" width="27" height="18" viewBox="0 0 27 18"><rect x="1" y="1.500" width="18" height="15" rx="3" fill="none" stroke="#bbb" stroke-width="1.200"/><path d="M21.500 7l4-3v10l-4-3z" fill="none" stroke="#bbb" stroke-width="1.200"/></svg>
<svg style="left:1245px;top:121px" width="22" height="22"><circle cx="11" cy="11" r="11" fill="#0084ff"/><circle cx="11" cy="6" r="1.700" fill="#fff"/><path d="M9 9.500h3.200v7.500H14v1.200H8.500V17h1.500v-6.300H9z" fill="#fff"/></svg>

<svg style="left:333px;top:166px;border-radius:50%" width="26" height="26" viewBox="0 0 50 50"><use href="#zoro"/></svg>
<svg style="left:351px;top:183px" width="12" height="12"><use href="#bdg"/></svg>
<div class="bub in" style="top:165px;width:106px">Sủa đi doggy</div>

<svg style="left:547px;top:340px" width="18" height="22" viewBox="0 0 18 22"><path d="M5 9H1v12h16V9h-4M9 15V2M4.500 6.500L9 2l4.500 4.500" fill="none" stroke="#ccc" stroke-width="1.200"/></svg>

<svg style="left:580px;top:212px;border-radius:18px" width="349" height="280" viewBox="0 0 349 280"><g filter="url(#bl)"><use href="#shot"/></g></svg>

<div class="bub out" style="left:828px;top:495px;width:101px;font-size:13.8px;padding-top:7px;border-radius:15px 4px 4px 15px">mincrash <svg class="e" viewBox="0 0 16 16"><use href="#sm"/></svg></div>
<div class="bub out" style="left:766px;top:528px;width:163px;font-size:14.5px;padding-top:7px;border-radius:15px 4px 15px 15px">9x thông minh quá <svg class="e" viewBox="0 0 16 16"><use href="#sm"/></svg></div>

<div class="bub in" style="top:577px;width:140px;font-size:13.9px;border-radius:14px 14px 14px 4px">Thích gì thì tao đặt</div>
<svg style="left:333px;top:609px;border-radius:50%" width="26" height="26" viewBox="0 0 50 50"><use href="#zoro"/></svg>
<svg style="left:351px;top:626px" width="12" height="12"><use href="#bdg"/></svg>
<div class="bub in" style="top:608px;width:86px;font-size:13.3px;border-radius:4px 14px 14px 14px">Sủa cl nhé</div>
<svg style="left:473px;top:615px" width="16" height="16"><circle cx="8" cy="8" r="7.300" fill="none" stroke="#ccc" stroke-width="1.200"/><circle cx="5.500" cy="6" r="1" fill="#ccc"/><circle cx="10.500" cy="6" r="1" fill="#ccc"/><path d="M4 9.500c1 3 7 3 8 0z" fill="#ddd"/></svg>
<div class="dots" style="left:498px;top:621px;background-image:radial-gradient(circle at 2px 2px,#c0c0c0 2px,transparent 2.300px)"></div>

<div class="bub out" style="left:788px;top:654px;width:141px;border-radius:15px 15px 4px 15px">thích <svg class="e" viewBox="0 0 16 16"><use href="#sm"/></svg> hay là dốt</div>
<div class="bub out" style="left:826px;top:687px;width:103px;font-size:14.3px;padding-top:7px;border-radius:15px 4px 4px 15px">k biết ghi <svg class="e" viewBox="0 0 16 16"><use href="#sm"/></svg></div>
<div class="bub out" style="left:853px;top:720px;width:76px;border-radius:15px 4px 4px 15px">trash <svg class="e" viewBox="0 0 16 16"><use href="#sm"/></svg></div>
<div class="bub out" style="left:597px;top:753px;width:332px;height:48px;border-radius:15px 4px 15px 15px;text-align:left;padding:6px 12px;line-height:18px;font-size:14.03px">sao bạn không chụp lun cái page mà 1 ô tin nhắn<br>thế <svg class="e" viewBox="0 0 16 16"><use href="#sm"/></svg></div>

<div class="bub in" style="top:819px;width:211px;font-size:14.1px;border-radius:14px 14px 14px 4px">Dốt mà lúc nãy mình ghi đúng</div>
<svg style="left:333px;top:851px;border-radius:50%" width="26" height="26" viewBox="0 0 50 50"><use href="#zoro"/></svg>
<svg style="left:351px;top:868px" width="12" height="12"><use href="#bdg"/></svg>
<div class="bub in" style="top:850px;width:130px;border-radius:4px 14px 14px 14px">Huhu bạn óc quá</div>

<div class="b" style="left:857px;top:896px;width:70px;height:30px;background:#0084ff;border-radius:15px 15px 0 0"></div>
<div class="b" style="left:321px;top:901px;width:638px;height:83px;background:#fff;border-top:1px solid #e5e5e5"></div>

<!-- composer -->
<div class="b" style="left:334px;top:918px;width:1px;height:18px;background:#222"></div>
<div class="t" style="left:334px;top:920px;font-size:13.6px;color:#c6c6c6">Nhập tin nhắn...</div>
<div class="b" style="left:934px;top:902px;width:17px;height:34px;background:#f1f1f1"></div>
<svg style="left:938px;top:909px" width="9" height="6"><path d="M0 6h9L4.500 0z" fill="#a3a3a3"/></svg>
<svg style="left:938px;top:924px" width="9" height="6"><path d="M0 0h9L4.500 6z" fill="#505050"/></svg>
<svg style="left:338px;top:949px" width="24" height="24" viewBox="0 0 24 24" fill="none" stroke="#c8c8c8"><path d="M3 3l14-2 4 19-14 2z"/><path d="M5 5h14v15H5z" fill="#fff"/><circle cx="9" cy="9" r="1.500"/><path d="M5 18l5-5 3 3 2-2 4 5"/></svg>
<svg style="left:374px;top:948px" width="25" height="26" viewBox="0 0 25 26" fill="none" stroke="#c8c8c8" stroke-width="1.100"><path d="M3 5l15-3c3 0 5 2 5 4l1 9-9 9-8 1c-2 0-3-1-3-3z"/><path d="M15 24c0-5 3-8 9-9"/><circle cx="9" cy="11" r=".8"/><circle cx="15" cy="9" r=".8"/><path d="M9 16c2 1 6 0 7-3"/></svg>
<div class="b" style="left:410px;top:948px;width:27px;height:25px;border:1px solid #c8c8c8;border-radius:6px;color:#c0c0c0;font-size:12px;line-height:22px;text-align:center">GIF</div>
<svg style="left:449px;top:949px" width="22" height="22" fill="none" stroke="#c8c8c8" stroke-width="1.100"><circle cx="11" cy="11" r="10"/><circle cx="7.500" cy="8.500" r=".8"/><circle cx="14.500" cy="8.500" r=".8"/><path d="M6 13c1.500 3.500 8.500 3.500 10 0"/></svg>
<svg style="left:486px;top:948px" width="16" height="25" fill="none" stroke="#c8c8c8" stroke-width="1.100"><rect x="4" y="1" width="8" height="15" rx="4"/><path d="M1 11c0 9 14 9 14 0M8 19v5M4 24h8"/></svg>
<svg style="left:516px;top:950px" width="24" height="20" fill="none" stroke="#c8c8c8" stroke-width="1.100"><path d="M1 5h6l2-3h6l2 3h6v14H1z"/><circle cx="12" cy="11" r="5"/></svg>
<svg style="left:922px;top:948px" width="24" height="24" viewBox="0 0 24 24"><path d="M6.500 12c3-1.200 5-5 5.800-9.500 2.400-.4 3.700 2.200 2.500 7h5.400c1.700 0 2.300 1.200 1.900 2.700l-1.900 7.300c-.3 1.300-1.200 1.900-2.400 1.900H9.300l-2.800-1z" fill="#d4eaff"/><use href="#thumb" stroke="#3f9fff" stroke-width="1.300"/></svg>

<!-- right panel -->
<svg style="left:975px;top:173px;border-radius:50%" width="49" height="49" viewBox="0 0 50 50"><use href="#zoro"/></svg>
<svg style="left:1011px;top:209px" width="14" height="14" viewBox="0 0 12 12"><use href="#bdg"/></svg>
<div class="t" style="left:1035px;top:182px;font-size:13.4px;color:#222">Huy Lê Vĩnh</div>
<div class="t" style="left:1035px;top:198px;font-size:12.2px;color:#aab">Hoạt động 1 phút trước</div>
<svg style="left:1249px;top:188px" width="18" height="18" viewBox="0 0 24 24"><use href="#gearp" fill="#c6c6c6"/><circle cx="12" cy="12" r="3" fill="#fff"/></svg>
<div class="ln" style="left:960px;top:238px;width:320px;height:1px"></div>
<div class="t hd" style="top:255px">Tùy chọn</div>
<div class="dots" style="left:1248px;top:261px"></div>

<svg style="left:978px;top:301px" width="18" height="18" fill="none" stroke="#3f9fff" stroke-width="1.100"><circle cx="7.500" cy="7.500" r="6.500"/><path d="M12 12l5 5"/></svg>
<div class="t it" style="top:299px">Tìm kiếm trong cuộc trò chuyện</div>
<svg style="left:976px;top:342px" width="22" height="20" fill="none" stroke="#2b8ff5"><path d="M4 14L16 2.500l2 2L6 16H3.500z"/><path d="M1 19h20" stroke-width="1.500"/></svg>
<div class="t it" style="top:342px">Chỉnh sửa biệt hiệu</div>
<svg style="left:977px;top:385px" width="23" height="23" viewBox="0 0 23 23" fill="none" stroke="#3f9fff" stroke-width="1.200"><path d="M11.500 1.500c6 0 10.500 4 10.500 9s-3.500 7-6 6c-2-.7-4 .5-3.500 2.500.4 2-.7 3-2.500 2.500C5 20.500 1 16.500 1 11.500c0-5.500 4.500-10 10.500-10z"/><circle cx="6" cy="9.500" r="1.200"/><circle cx="10.500" cy="6" r="1.200"/><circle cx="15.500" cy="6.500" r="1.200"/><circle cx="18" cy="11" r="1.200"/></svg>
<div class="t it" style="top:385px">Thay đổi màu</div>
<svg style="left:976px;top:425px" width="25" height="25" viewBox="0 0 24 24"><use href="#thumb" stroke="#3f9fff" stroke-width="1.300"/></svg>
<div class="t it" style="top:428px">Thay đổi biểu tượng cảm xúc</div>
<svg style="left:980px;top:471px" width="18" height="22" fill="none" stroke="#2b8ff5" stroke-width="1.300"><path d="M1 17c2-1 2.500-3 2.500-7S5 3 9 3s5.500 3 5.500 7 .5 6 2.500 7z"/><path d="M7.500 3c0-2.500 3-2.500 3 0M6.500 19.500h5"/></svg>
<div class="t it" style="top:471px">Thông báo</div>
<div class="ln" style="left:960px;top:519px;width:320px;height:1px"></div>
<div class="t hd" style="top:533px">Trang cá nhân Facebook</div>
<div class="t" style="left:975px;top:564px;font-size:14.15px;color:#0a7ae0">https://facebook.com/VinhHuy.0504</div>
<div class="ln" style="left:960px;top:603px;width:320px;height:1px"></div>
<div class="t hd" style="top:614px">Ảnh đã chia sẻ</div>
<div class="dots" style="left:1248px;top:620px"></div>

<svg style="left:972px;top:646px" width="97" height="97" viewBox="30 0 280 280"><g filter="url(#bl2)"><use href="#shot"/></g></svg>
<svg style="left:1072px;top:646px" width="96" height="97" viewBox="0 0 280 280"><g filter="url(#bl2)"><use href="#shot2"/></g></svg>
<svg style="left:1171px;top:646px" width="97" height="97" viewBox="0 0 280 280"><g filter="url(#bl2)"><use href="#shot3"/></g></svg>
<svg style="left:972px;top:745px" width="97" height="97" viewBox="0 0 280 280"><g filter="url(#bl2)"><use href="#shot4"/></g></svg>

<!-- status tooltip -->
<div class="b" style="left:0;top:962px;width:425px;height:22px;background:rgba(255,255,255,.6);border-top:1px solid #eee;border-right:1px solid #eee;color:#c8c8c8;font-size:12px;line-height:22px;padding-left:3px;white-space:nowrap;overflow:hidden">https://l.facebook.com/l.php?u=https%3A%2F%2Fscontent.fsgn2-1.fna.fbcdn...</div>

<!-- taskbar -->
<div class="b" style="left:0;top:984px;width:1280px;height:40px;background:#050505;border-top:1px solid #777"></div>
<div class="b" style="left:0;top:985px;width:1280px;height:6px;background:linear-gradient(#2b2020,#050505)"></div>
<svg style="left:7px;top:985px" width="40" height="39" viewBox="0 0 40 39"><defs><radialGradient id="orb" cx=".5" cy=".8" r=".8"><stop offset="0" stop-color="#5fd0f5"/><stop offset=".6" stop-color="#1a6ba8"/><stop offset="1" stop-color="#0b2a4a"/></radialGradient></defs><circle cx="20" cy="19.500" r="18.500" fill="url(#orb)" stroke="#9bbad0"/><path d="M10 14c3-2 6-2 9 0l-1.500 6c-3-1.500-6-1.500-9 0z" fill="#e8543a"/><path d="M20 14c3 2 6 2 9 .5l-1.500 6c-3 1.500-6 1-9-.5z" fill="#8cc63f"/><path d="M8.500 21c3-1.500 6-1.500 8.500 0l-1.500 6c-3-1.500-6-1.500-8.500 0z" fill="#3fa9f5"/><path d="M18 21c3 1.500 6 2 9 .5l-1.500 6c-3 1.500-6 1-9-.5z" fill="#fcc82c"/></svg>
<div class="b" style="left:60px;top:986px;width:58px;height:36px;background:linear-gradient(#e8e8e8,#9a9a9a);border:1px solid #ccc;border-radius:2px"></div>
<svg style="left:72px;top:988px" width="34" height="32" viewBox="0 0 34 32"><circle cx="16" cy="17" r="14" fill="#58b33b"/><path d="M19 9a9 9 0 1 0 6.500 6.500" fill="none" stroke="#fff" stroke-width="2.500"/><circle cx="16" cy="17" r="3.500" fill="none" stroke="#fff" stroke-width="2"/><path d="M21 1l-1 8M28 3l-5 7M32 11l-7 2" stroke="#f05a28" stroke-width="2.500"/></svg>
<div class="b" style="left:122px;top:986px;width:58px;height:36px;background:linear-gradient(#4a4a4a,#0e0e0e);border:1px solid #555;border-radius:2px"></div>
<svg style="left:135px;top:987px" width="32" height="34" viewBox="0 0 32 34"><path d="M16 1l15 7-15 7L1 8z" fill="#a8703a"/><path d="M1 8l15 7v18L1 26z" fill="#6e4a28"/><path d="M31 8L16 15v18l15-7z" fill="#8a5c30"/><path d="M5 13v9l6 3v-9zM21 18v9l6-3v-9z" fill="#2a1c10"/><path d="M8 4l16 7M16 1l15 7M24 4L8 11M16 1L1 8" stroke="#6e4a28" stroke-width=".8"/></svg>
<div class="t" style="left:1119px;top:993px;font-size:12px;color:#fff">EN</div>
<svg style="left:1151px;top:1001px" width="8" height="5"><path d="M0 5h8L4 0z" fill="#fff"/></svg>
<svg style="left:1171px;top:1002px" width="15" height="16" fill="none" stroke="#fff" stroke-width="1.200"><rect x="4" y="3" width="10" height="9"/><path d="M9 12v2M5 15h8"/><rect x="1" y="0" width="3" height="6" fill="#fff"/></svg>
<div class="t" style="left:1190px;width:78px;text-align:center;top:988px;font-size:12px;color:#fff">3:16 PM</div>
<div class="t" style="left:1190px;width:78px;text-align:center;top:1004px;font-size:12px;color:#fff">7/11/2017</div>
<div class="b" style="left:1266px;top:985px;width:14px;height:39px;background:linear-gradient(#777,#222 70%);border:1px solid #888"></div>
</body></html>
